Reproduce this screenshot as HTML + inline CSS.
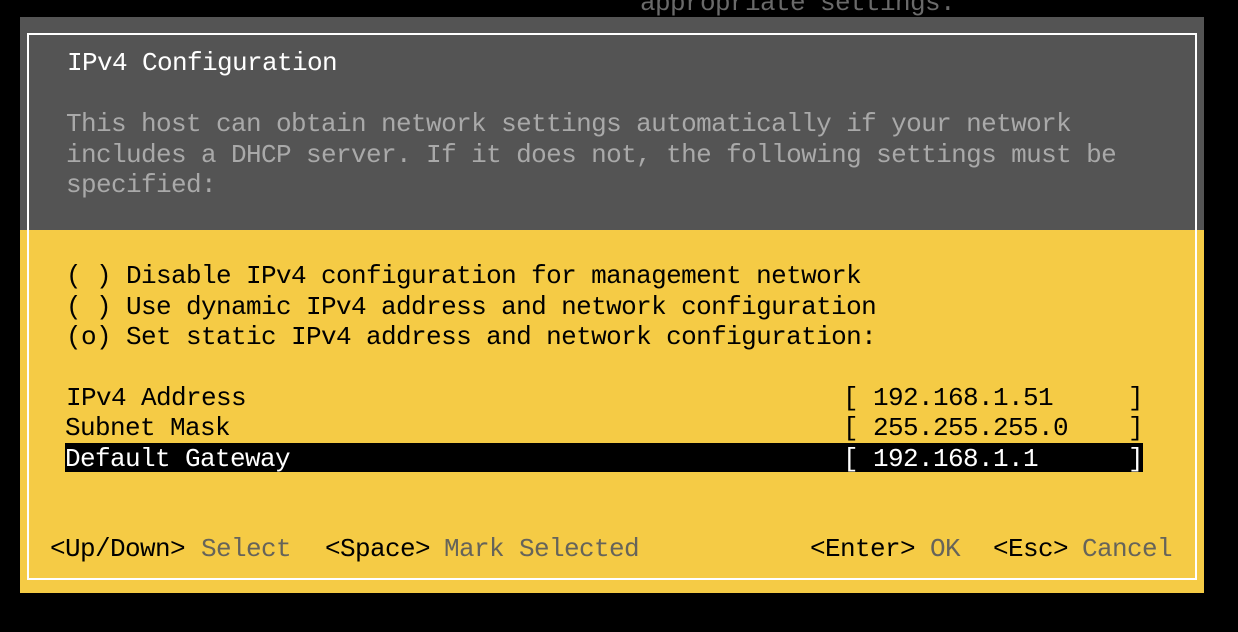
<!DOCTYPE html>
<html><head><meta charset="utf-8"><style>
html,body{margin:0;padding:0;background:#000;width:1238px;height:632px;overflow:hidden;position:relative}
div.t{position:absolute;font-family:"Liberation Mono","DejaVu Sans Mono",monospace;font-size:26px;letter-spacing:-0.6px;line-height:30px;height:30px;white-space:pre}
.w{color:#fff}.g{color:#a9a9a9}.k{color:#000}.d{color:#66645a}
</style></head><body>
<div class="t" style="left:640px;top:-12px;color:#6a6a6a">appropriate settings.</div>
<div style="position:absolute;left:20px;top:17px;width:1184px;height:213px;background:#545454"></div>
<div style="position:absolute;left:20px;top:230px;width:1184px;height:363px;background:#f5cb45"></div>
<div style="position:absolute;left:27px;top:33px;width:1166px;height:543px;border:2px solid #fff"></div>
<div class="t w" style="left:67px;top:48px">IPv4 Configuration</div>
<div class="t g" style="left:66px;top:109px">This host can obtain network settings automatically if your network</div>
<div class="t g" style="left:66px;top:140px">includes a DHCP server. If it does not, the following settings must be</div>
<div class="t g" style="left:66px;top:170px">specified:</div>
<div class="t k" style="left:66px;top:261px">( ) Disable IPv4 configuration for management network</div>
<div class="t k" style="left:66px;top:292px">( ) Use dynamic IPv4 address and network configuration</div>
<div class="t k" style="left:66px;top:322px">(o) Set static IPv4 address and network configuration:</div>
<div class="t k" style="left:66px;top:383px">IPv4 Address</div>
<div class="t k" style="left:843px;top:383px">[ 192.168.1.51     ]</div>
<div class="t k" style="left:65px;top:413px">Subnet Mask</div>
<div class="t k" style="left:843px;top:413px">[ 255.255.255.0    ]</div>
<div style="position:absolute;left:65px;top:443px;width:1078px;height:29px;background:#000"></div>
<div class="t w" style="left:65px;top:444px">Default Gateway</div>
<div class="t w" style="left:843px;top:444px">[ 192.168.1.1      ]</div>
<div class="t k" style="left:50px;top:534px">&lt;Up/Down&gt;</div>
<div class="t d" style="left:201px;top:534px">Select</div>
<div class="t k" style="left:325px;top:534px">&lt;Space&gt;</div>
<div class="t d" style="left:444px;top:534px">Mark Selected</div>
<div class="t k" style="left:810px;top:534px">&lt;Enter&gt;</div>
<div class="t d" style="left:930px;top:534px">OK</div>
<div class="t k" style="left:993px;top:534px">&lt;Esc&gt;</div>
<div class="t d" style="left:1082px;top:534px">Cancel</div>
</body></html>
